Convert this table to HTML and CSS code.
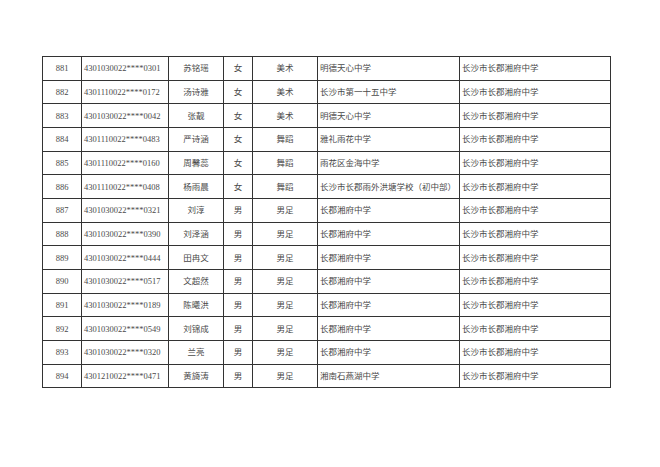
FILE: index.html
```html
<!DOCTYPE html>
<html lang="zh">
<head>
<meta charset="utf-8">
<title>名单</title>
<link rel="stylesheet" href="styles.css">
</head>
<body>
<table class="list">
  <colgroup>
    <col class="c-no"><col class="c-id"><col class="c-name"><col class="c-sex"><col class="c-item"><col class="c-from"><col class="c-to">
  </colgroup>
  <tbody>
    <tr><td>881</td><td class="l">4301030022****0301</td><td>苏铭瑶</td><td>女</td><td>美术</td><td class="l">明德天心中学</td><td class="l">长沙市长郡湘府中学</td></tr>
    <tr><td>882</td><td class="l">4301110022****0172</td><td>汤诗雅</td><td>女</td><td>美术</td><td class="l">长沙市第一十五中学</td><td class="l">长沙市长郡湘府中学</td></tr>
    <tr><td>883</td><td class="l">4301030022****0042</td><td>张靓</td><td>女</td><td>美术</td><td class="l">明德天心中学</td><td class="l">长沙市长郡湘府中学</td></tr>
    <tr><td>884</td><td class="l">4301110022****0483</td><td>严诗涵</td><td>女</td><td>舞蹈</td><td class="l">雅礼雨花中学</td><td class="l">长沙市长郡湘府中学</td></tr>
    <tr><td>885</td><td class="l">4301110022****0160</td><td>周馨蕊</td><td>女</td><td>舞蹈</td><td class="l">雨花区金海中学</td><td class="l">长沙市长郡湘府中学</td></tr>
    <tr><td>886</td><td class="l">4301110022****0408</td><td>杨雨晨</td><td>女</td><td>舞蹈</td><td class="l">长沙市长郡雨外洪塘学校（初中部）</td><td class="l">长沙市长郡湘府中学</td></tr>
    <tr><td>887</td><td class="l">4301030022****0321</td><td>刘淳</td><td>男</td><td>男足</td><td class="l">长郡湘府中学</td><td class="l">长沙市长郡湘府中学</td></tr>
    <tr><td>888</td><td class="l">4301030022****0390</td><td>刘泽涵</td><td>男</td><td>男足</td><td class="l">长郡湘府中学</td><td class="l">长沙市长郡湘府中学</td></tr>
    <tr><td>889</td><td class="l">4301030022****0444</td><td>田冉文</td><td>男</td><td>男足</td><td class="l">长郡湘府中学</td><td class="l">长沙市长郡湘府中学</td></tr>
    <tr><td>890</td><td class="l">4301030022****0517</td><td>文超然</td><td>男</td><td>男足</td><td class="l">长郡湘府中学</td><td class="l">长沙市长郡湘府中学</td></tr>
    <tr><td>891</td><td class="l">4301030022****0189</td><td>陈曦洪</td><td>男</td><td>男足</td><td class="l">长郡湘府中学</td><td class="l">长沙市长郡湘府中学</td></tr>
    <tr><td>892</td><td class="l">4301030022****0549</td><td>刘锦成</td><td>男</td><td>男足</td><td class="l">长郡湘府中学</td><td class="l">长沙市长郡湘府中学</td></tr>
    <tr><td>893</td><td class="l">4301030022****0320</td><td>兰亮</td><td>男</td><td>男足</td><td class="l">长郡湘府中学</td><td class="l">长沙市长郡湘府中学</td></tr>
    <tr><td>894</td><td class="l">4301210022****0471</td><td>黄旖涛</td><td>男</td><td>男足</td><td class="l">湘南石燕湖中学</td><td class="l">长沙市长郡湘府中学</td></tr>
  </tbody>
</table>
</body>
</html>
```
FILE: styles.css
```css
html, body {
  margin: 0;
  padding: 0;
  background: #ffffff;
}
body {
  padding: 56px 0 0 42px;
  font-family: "Liberation Serif", "Noto Sans CJK SC", serif;
  color: #4a4a4a;
}
.list {
  border-collapse: collapse;
  table-layout: fixed;
  width: 568px;
  font-size: 8.5px;
}
.c-no { width: 39px; }
.c-id { width: 87px; }
.c-name { width: 55px; }
.c-sex { width: 29px; }
.c-item { width: 65px; }
.c-from { width: 142px; }
.c-to { width: 151px; }
.list tr {
  height: 23.67px;
}
.list td {
  border: 1px solid #333333;
  padding: 0 1px;
  text-align: center;
  vertical-align: middle;
  white-space: nowrap;
  overflow: hidden;
  line-height: 10px;
}
.list td.l {
  text-align: left;
  padding-left: 2px;
}
```
